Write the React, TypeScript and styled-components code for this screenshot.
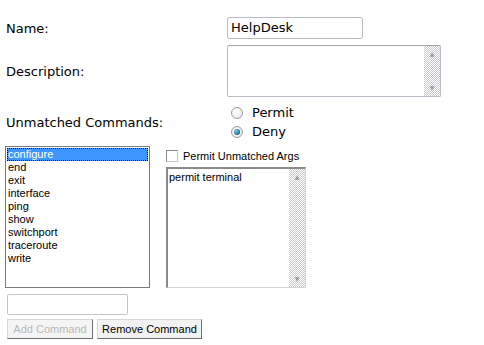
import styled, { createGlobalStyle } from "styled-components";

const GlobalStyle = createGlobalStyle`
  html, body {
    margin: 0;
    padding: 0;
    background: #ffffff;
  }
  body {
    font-family: "DejaVu Sans", Verdana, sans-serif;
    color: #000;
  }
`;

const commands = [
  "configure",
  "end",
  "exit",
  "interface",
  "ping",
  "show",
  "switchport",
  "traceroute",
  "write",
];

const checker = `repeating-conic-gradient(#c9c9c9 0% 25%, #ffffff 0% 50%) 0 0 / 2px 2px`;

const Page = styled.div`
  width: 484px;
  height: 345px;
  padding: 17px 0 0 5px;
  box-sizing: border-box;
`;

const Row = styled.div<{ $top?: number }>`
  display: grid;
  grid-template-columns: 222px auto;
  align-items: center;
  margin-top: ${({ $top }) => $top ?? 0}px;
`;

const Label = styled.div`
  font-size: 13px;
  padding-left: 1px;
`;

const TextInput = styled.div<{ $w: number; $h: number }>`
  width: ${({ $w }) => $w}px;
  height: ${({ $h }) => $h}px;
  box-sizing: border-box;
  border: 1px solid #b9bcc6;
  border-radius: 2px;
  background: #fff;
  font-size: 13px;
  padding: 3px 0 0 3px;
  line-height: 14px;
`;

const TextArea = styled.div`
  width: 214px;
  height: 52px;
  box-sizing: border-box;
  border: 1px solid #b9bcc6;
  border-top-color: #a6a8b0;
  border-radius: 2px;
  background: #fff;
  display: flex;
  justify-content: flex-end;
`;

const ScrollBar = styled.div`
  width: 16px;
  height: 100%;
  background: ${checker};
  display: flex;
  flex-direction: column;
  justify-content: space-between;
  align-items: center;
  padding: 5px 0;
  box-sizing: border-box;
  color: #9a9a9a;
  font-size: 6px;
  line-height: 6px;
  font-family: "DejaVu Sans", sans-serif;
`;

const RadioGroup = styled.div`
  display: flex;
  flex-direction: column;
`;

const RadioRow = styled.div`
  display: flex;
  align-items: center;
  height: 19px;
  font-size: 13px;
  padding-left: 4px;
`;

const RadioDot = styled.span<{ $checked?: boolean }>`
  width: 12px;
  height: 12px;
  border-radius: 50%;
  box-sizing: border-box;
  border: 1px solid #9c9c9c;
  background: radial-gradient(circle at 40% 40%, #ffffff 0%, #e4e4e4 100%);
  margin-right: 9px;
  display: flex;
  align-items: center;
  justify-content: center;

  &::after {
    content: "";
    display: ${({ $checked }) => ($checked ? "block" : "none")};
    width: 6px;
    height: 6px;
    border-radius: 50%;
    background: radial-gradient(circle at 35% 35%, #6fd0f0 0%, #1a6a8a 70%, #0c3d55 100%);
  }
`;

const Workspace = styled.div`
  display: flex;
  align-items: flex-start;
  margin-top: 5px;
`;

const ListBox = styled.div`
  width: 145px;
  height: 142px;
  box-sizing: border-box;
  border: 1px solid #7a7a7a;
  background: #fff;
  padding: 1px;
  font-family: "Liberation Sans", Arial, sans-serif;
  font-size: 11px;
`;

const ListItem = styled.div<{ $selected?: boolean }>`
  height: 13px;
  line-height: 13px;
  padding-left: 1px;
  background: ${({ $selected }) => ($selected ? "#3d95ff" : "transparent")};
  color: ${({ $selected }) => ($selected ? "#ffffff" : "#000000")};
  outline: ${({ $selected }) => ($selected ? "1px dotted #000" : "none")};
  outline-offset: -1px;
`;

const ArgsPanel = styled.div`
  margin-left: 16px;
  display: flex;
  flex-direction: column;
`;

const CheckRow = styled.label`
  display: flex;
  align-items: center;
  height: 12px;
  margin-top: 4px;
  font-family: "Liberation Sans", Arial, sans-serif;
  font-size: 11px;
`;

const CheckBox = styled.span`
  width: 12px;
  height: 12px;
  box-sizing: border-box;
  border: 1px solid #c4c4c4;
  border-top-color: #8c8c8c;
  border-left-color: #8c8c8c;
  background: #fff;
  margin-right: 5px;
`;

const ArgsArea = styled.div`
  margin-top: 5px;
  width: 140px;
  height: 121px;
  box-sizing: border-box;
  border: 1px solid #d2d2d2;
  border-top: 2px solid #8a8a8a;
  border-left: 2px solid #8a8a8a;
  background: #fff;
  display: flex;
  font-family: "Liberation Sans", Arial, sans-serif;
  font-size: 11px;
`;

const ArgsText = styled.div`
  flex: 1;
  padding: 2px 0 0 1px;
  line-height: 13px;
`;

const NewCommand = styled(TextInput)`
  margin: 6px 0 0 2px;
  border-color: #c4c6cc;
`;

const ButtonRow = styled.div`
  display: flex;
  gap: 4px;
  margin: 4px 0 0 2px;
`;

const Button = styled.button<{ $w: number }>`
  width: ${({ $w }) => $w}px;
  height: 20px;
  box-sizing: border-box;
  padding: 0;
  white-space: nowrap;
  font-family: "Liberation Sans", Arial, sans-serif;
  font-size: 11px;
  color: #000;
  background: #f2f2f2;
  border: 1px solid;
  border-color: #d8d8d8 #6f6f6f #6f6f6f #d8d8d8;
  border-radius: 0;
  cursor: default;

  &:disabled {
    color: #b8b8b8;
    background: #f4f4f4;
  }
`;

export default function App() {
  return (
    <>
      <GlobalStyle />
      <Page>
        <Row>
          <Label>Name:</Label>
          <TextInput $w={136} $h={22}>HelpDesk</TextInput>
        </Row>
        <Row $top={6}>
          <Label>Description:</Label>
          <TextArea>
            <ScrollBar>
              <span>▲</span>
              <span>▼</span>
            </ScrollBar>
          </TextArea>
        </Row>
        <Row $top={6}>
          <Label>Unmatched Commands:</Label>
          <RadioGroup>
            <RadioRow>
              <RadioDot />
              Permit
            </RadioRow>
            <RadioRow>
              <RadioDot $checked />
              Deny
            </RadioRow>
          </RadioGroup>
        </Row>
        <Workspace>
          <ListBox>
            {commands.map((c, i) => (
              <ListItem key={c} $selected={i === 0}>
                {c}
              </ListItem>
            ))}
          </ListBox>
          <ArgsPanel>
            <CheckRow>
              <CheckBox />
              Permit Unmatched Args
            </CheckRow>
            <ArgsArea>
              <ArgsText>permit terminal</ArgsText>
              <ScrollBar>
                <span>▲</span>
                <span>▼</span>
              </ScrollBar>
            </ArgsArea>
          </ArgsPanel>
        </Workspace>
        <NewCommand $w={121} $h={21} />
        <ButtonRow>
          <Button disabled $w={86}>Add Command</Button>
          <Button $w={105}>Remove Command</Button>
        </ButtonRow>
      </Page>
    </>
  );
}
